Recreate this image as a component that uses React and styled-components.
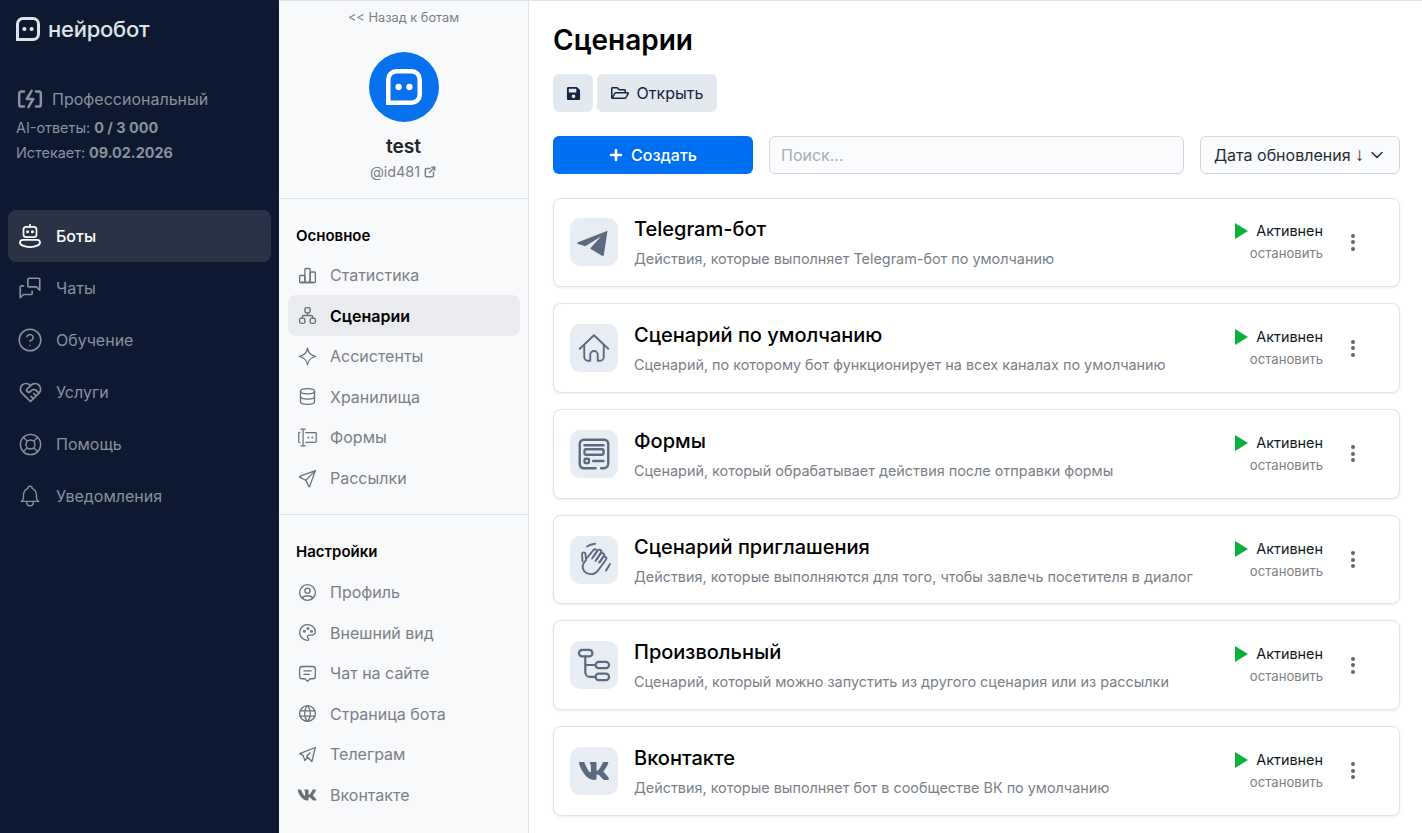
import React from 'react';
import styled, { createGlobalStyle } from 'styled-components';
import {
  TbMessages, TbHeartHandshake, TbLifebuoy, TbBell,
  TbChartBar, TbSitemap, TbDatabase, TbSend, TbUserCircle, TbPalette,
  TbMessage2, TbWorld, TbBrandTelegram, TbExternalLink, TbChevronDown,
} from 'react-icons/tb';
import { LuCircleHelp } from 'react-icons/lu';
import { FaVk, FaSave, FaRegFolderOpen, FaPlus } from 'react-icons/fa';

const GlobalStyle = createGlobalStyle`
  html, body { margin: 0; height: 100%; }
  body {
    font-family: Inter, "Liberation Sans", sans-serif;
    background: #fff;
    overflow: hidden;
  }
  * { box-sizing: border-box; }
`;

const Logo = ({ size = 24, color = '#fff' }) => (
  <svg width={size} height={size} viewBox="0 0 24 24" fill="none">
    <path d="M1.5 22.5V7A5.5 5.5 0 0 1 7 1.5h10A5.5 5.5 0 0 1 22.5 7v10a5.5 5.5 0 0 1-5.5 5.5H1.5z" stroke={color} strokeWidth="3" />
    <circle cx="8.4" cy="12" r="2.1" fill={color} />
    <circle cx="15.6" cy="12" r="2.1" fill={color} />
  </svg>
);

const Stroke = ({ children, size = 24, width = 1.5, box = 24 }) => (
  <svg width={size} height={size} viewBox={`0 0 ${box} ${box}`} fill="none" stroke="currentColor" strokeWidth={width} strokeLinecap="round" strokeLinejoin="round">
    {children}
  </svg>
);

const PlanIcon = () => (
  <Stroke size={26} width={2.3}>
    <path d="M6.5 5H4a2 2 0 0 0-2 2v10a2 2 0 0 0 2 2h2.5" />
    <path d="M17.5 5H20a2 2 0 0 1 2 2v10a2 2 0 0 1-2 2h-2.5" />
    <path d="M13.5 4.5L9 12h6l-4.5 7.5" />
  </Stroke>
);

const RobotIcon = () => (
  <Stroke size={26} width={1.6}>
    <path d="M12 1.5v2" />
    <rect x="6" y="3.5" width="12" height="9.5" rx="2.5" />
    <circle cx="9.8" cy="8" r=".6" fill="currentColor" />
    <circle cx="14.2" cy="8" r=".6" fill="currentColor" />
    <path d="M5.5 15.5h13a2.8 2.8 0 0 1 2.8 2.4c0 2.3-4 4.3-9.3 4.3s-9.3-2-9.3-4.3a2.8 2.8 0 0 1 2.8-2.4z" />
  </Stroke>
);

const StarIcon = () => (
  <Stroke size={21} width={1.4}>
    <path d="M12 2.5c.8 5.3 3.8 8.5 9.5 9.5-5.7 1-8.7 4.2-9.5 9.5-.8-5.3-3.8-8.5-9.5-9.5 5.7-1 8.7-4.2 9.5-9.5z" />
  </Stroke>
);

const FormFieldIcon = () => (
  <Stroke size={21} width={1.4}>
    <path d="M3.5 6H3a1 1 0 0 0-1 1v10a1 1 0 0 0 1 1h.5" />
    <path d="M4.5 2.5h5M4.5 21.5h5M7 2.5v19" />
    <path d="M10 6.5h11a1 1 0 0 1 1 1v9a1 1 0 0 1-1 1H10" />
    <circle cx="13" cy="12" r=".5" fill="currentColor" />
    <circle cx="17.5" cy="12" r=".5" fill="currentColor" />
  </Stroke>
);

const PlaneIcon = () => (
  <svg width="48" height="48" viewBox="0 0 48 48" fill="currentColor">
    <path d="M37.5 12.8 8 24.2c-1.2.5-1.1 1.3 0 1.7l7.3 2.4L31 18.5 20 30.5l12 7.2c1 .5 1.7.2 1.9-.9z" />
  </svg>
);

const HomeIcon = () => (
  <Stroke size={36} width={1.25}>
    <path d="M2.5 12.500L12 3.500l9.500 9" />
    <path d="M5.500 10v8a2.500 2.500 0 0 0 2.500 2.500h1.500v-4a2.500 2.500 0 0 1 5 0v4H16a2.500 2.500 0 0 0 2.500-2.500v-8" />
  </Stroke>
);

const FormsCardIcon = () => (
  <Stroke size={38} width={1.5}>
    <path d="M13 21H5.5A2.5 2.5 0 0 1 3 18.5v-13A2.5 2.5 0 0 1 5.5 3h13A2.5 2.5 0 0 1 21 5.5V18a3 3 0 0 1-3 3h-1.5" />
    <path d="M6 6.5h12" />
    <rect x="6" y="9" width="12" height="3.5" rx=".8" />
    <rect x="6" y="15" width="2.8" height="2.8" rx=".8" />
    <path d="M11.5 16.4H18" />
  </Stroke>
);

const WaveIcon = () => (
  <Stroke size={48} width={1.9} box={48}>
    <path d="M16 24l-2.5 3.500c-2 3.500-.5 7.500 3 9.500 4 2.200 9 1.200 11.500-2.500L36 23.500c1.300-2-1.500-4-3-2.300L29 26.500" />
    <path d="M30 26l3.800-6c1.300-2-1.500-4-3.200-2.200L25.500 25" />
    <path d="M26.500 23.500l4.500-7c1.200-2-1.500-3.800-3-2.200L22 22.500" />
    <path d="M23.500 20.500l3-4.500c1.200-2-1.300-3.700-2.900-2.200L16 23l-.5-5c-.3-2.300-3.500-2-3.500.3l.5 7" />
    <path d="M17 10.500c2-1.500 5-2.500 8-2.800" />
    <path d="M36 34.500l4-6.500" />
  </Stroke>
);

const TreeIcon = () => (
  <Stroke size={38} width={1.4}>
    <rect x="2.5" y="2.5" width="8.5" height="4" rx="2" />
    <rect x="13" y="10" width="8.5" height="4" rx="2" />
    <rect x="13" y="17.5" width="8.5" height="4" rx="2" />
    <path d="M6.5 6.5v10a3 3 0 0 0 3 3H13M6.5 12H13" />
  </Stroke>
);

const PlayMark = () => (
  <svg width="13" height="16" viewBox="0 0 13 16" fill="currentColor">
    <path d="M0 0l13 8-13 8z" />
  </svg>
);

const mainNav = [
  { label: 'Боты', icon: <RobotIcon />, active: true },
  { label: 'Чаты', icon: <TbMessages size={26} strokeWidth={1.5} /> },
  { label: 'Обучение', icon: <LuCircleHelp size={26} strokeWidth={1.4} /> },
  { label: 'Услуги', icon: <TbHeartHandshake size={27} strokeWidth={1.5} /> },
  { label: 'Помощь', icon: <TbLifebuoy size={27} strokeWidth={1.25} /> },
  { label: 'Уведомления', icon: <TbBell size={26} strokeWidth={1.25} /> },
];

const basicNav = [
  { label: 'Статистика', icon: <TbChartBar size={21} strokeWidth={1.5} /> },
  { label: 'Сценарии', icon: <TbSitemap size={21} strokeWidth={1.6} />, active: true },
  { label: 'Ассистенты', icon: <StarIcon /> },
  { label: 'Хранилища', icon: <TbDatabase size={21} strokeWidth={1.5} /> },
  { label: 'Формы', icon: <FormFieldIcon /> },
  { label: 'Рассылки', icon: <TbSend size={21} strokeWidth={1.5} /> },
];

const settingsNav = [
  { label: 'Профиль', icon: <TbUserCircle size={21} strokeWidth={1.5} /> },
  { label: 'Внешний вид', icon: <TbPalette size={21} strokeWidth={1.5} /> },
  { label: 'Чат на сайте', icon: <TbMessage2 size={21} strokeWidth={1.5} /> },
  { label: 'Страница бота', icon: <TbWorld size={21} strokeWidth={1.5} /> },
  { label: 'Телеграм', icon: <TbBrandTelegram size={21} strokeWidth={1.5} /> },
  { label: 'Вконтакте', icon: <FaVk size={20} /> },
];

const scenarios = [
  { title: 'Telegram-бот', text: 'Действия, которые выполняет Telegram-бот по умолчанию', icon: <PlaneIcon /> },
  { title: 'Сценарий по умолчанию', text: 'Сценарий, по которому бот функционирует на всех каналах по умолчанию', icon: <HomeIcon /> },
  { title: 'Формы', text: 'Сценарий, который обрабатывает действия после отправки формы', icon: <FormsCardIcon /> },
  { title: 'Сценарий приглашения', text: 'Действия, которые выполняются для того, чтобы завлечь посетителя в диалог', icon: <WaveIcon /> },
  { title: 'Произвольный', text: 'Сценарий, который можно запустить из другого сценария или из рассылки', icon: <TreeIcon /> },
  { title: 'Вконтакте', text: 'Действия, которые выполняет бот в сообществе ВК по умолчанию', icon: <FaVk size={32} /> },
];

const App = () => (
  <>
    <GlobalStyle />
    <Page>
      <DarkSidebar>
        <Brand>
          <Logo size={24} color="#dfe3e8" />
          <BrandName>нейробот</BrandName>
        </Brand>
        <Plan>
          <PlanRow>
            <PlanIcon />
            <PlanName>Профессиональный</PlanName>
          </PlanRow>
          <PlanLine>AI-ответы: <b>0 / 3 000</b></PlanLine>
          <PlanLine>Истекает: <b>09.02.2026</b></PlanLine>
        </Plan>
        <DarkNav>
          {mainNav.map((item) => (
            <DarkNavItem key={item.label} $active={item.active}>
              <DarkIcon>{item.icon}</DarkIcon>
              {item.label}
            </DarkNavItem>
          ))}
        </DarkNav>
      </DarkSidebar>

      <BotPanel>
        <BackLink>&lt;&lt; Назад к ботам</BackLink>
        <Avatar><Logo size={36} /></Avatar>
        <BotName>test</BotName>
        <BotHandle>@id481<TbExternalLink size={14} strokeWidth={2.6} /></BotHandle>
        <Section>
          <SectionTitle>Основное</SectionTitle>
          {basicNav.map((item) => (
            <PanelItem key={item.label} $active={item.active}>
              <PanelIcon>{item.icon}</PanelIcon>
              {item.label}
            </PanelItem>
          ))}
        </Section>
        <Section>
          <SectionTitle>Настройки</SectionTitle>
          {settingsNav.map((item) => (
            <PanelItem key={item.label}>
              <PanelIcon>{item.icon}</PanelIcon>
              {item.label}
            </PanelItem>
          ))}
        </Section>
      </BotPanel>

      <Main>
        <Title>Сценарии</Title>
        <Tools>
          <ToolButton $square><FaSave size={15} /></ToolButton>
          <ToolButton><FaRegFolderOpen size={18} />Открыть</ToolButton>
        </Tools>
        <Filters>
          <CreateButton><FaPlus size={14} />Создать</CreateButton>
          <Search placeholder="Поиск..." />
          <Sort>
            <span>Дата обновления <SortArrow>↓</SortArrow></span>
            <TbChevronDown size={20} strokeWidth={1.8} />
          </Sort>
        </Filters>
        <Cards>
          {scenarios.map((s) => (
            <Card key={s.title}>
              <CardIcon>{s.icon}</CardIcon>
              <CardBody>
                <CardTitle>{s.title}</CardTitle>
                <CardText>{s.text}</CardText>
              </CardBody>
              <Status>
                <StatusRow><PlayMark />Активнен</StatusRow>
                <StopLink>остановить</StopLink>
              </Status>
              <Dots>
                <i /><i /><i />
              </Dots>
            </Card>
          ))}
        </Cards>
      </Main>
    </Page>
  </>
);

const Page = styled.div`
  display: flex;
  height: 100vh;
  overflow: hidden;
`;

const DarkSidebar = styled.aside`
  flex: 0 0 279px;
  background: #0d1930;
  padding: 16px 8px 0;
`;

const Brand = styled.div`
  display: flex;
  align-items: center;
  gap: 8px;
  padding-left: 8px;
  height: 26px;
`;

const BrandName = styled.span`
  font-size: 22px;
  font-weight: 500;
  letter-spacing: -0.25px;
  color: #dfe3e8;
`;

const Plan = styled.div`
  margin-top: 44px;
  padding-left: 8px;
  color: #8a919c;
`;

const PlanRow = styled.div`
  display: flex;
  align-items: center;
  gap: 9px;
  padding-left: 1px;
  height: 26px;
  margin-bottom: 3px;
`;

const PlanName = styled.span`
  font-size: 16px;
`;

const PlanLine = styled.div`
  font-size: 14.4px;
  line-height: 25px;
  b { font-weight: 700; }
`;

const DarkNav = styled.nav`
  margin-top: 45px;
  display: flex;
  flex-direction: column;
`;

const DarkNavItem = styled.div`
  display: flex;
  align-items: center;
  height: 52px;
  padding-left: 8px;
  border-radius: 8px;
  font-size: 16px;
  font-weight: ${({ $active }) => ($active ? 500 : 400)};
  color: ${({ $active }) => ($active ? '#fff' : '#8a919c')};
  background: ${({ $active }) => ($active ? '#2a3345' : 'transparent')};
`;

const DarkIcon = styled.span`
  display: flex;
  justify-content: center;
  width: 28px;
  margin-right: 12px;
`;

const BotPanel = styled.aside`
  flex: 0 0 250px;
  background: #f8f9fb;
  border-top: 1px solid #dfe2e7;
  border-right: 1px solid #dfe2e7;
  display: flex;
  flex-direction: column;
  align-items: center;
`;

const BackLink = styled.a`
  margin-top: 9px;
  font-size: 12.8px;
  line-height: 16px;
  color: #7b8087;
`;

const Avatar = styled.div`
  margin-top: 26px;
  width: 70px;
  height: 70px;
  border-radius: 50%;
  background: #0872ee;
  display: flex;
  align-items: center;
  justify-content: center;
`;

const BotName = styled.div`
  margin-top: 11px;
  font-size: 19.2px;
  line-height: 26px;
  font-weight: 600;
  color: #20242b;
`;

const BotHandle = styled.div`
  margin-top: 3px;
  display: flex;
  align-items: center;
  gap: 3px;
  font-size: 14.4px;
  line-height: 20px;
  color: #7b8087;
`;

const SectionTitle = styled.h3`
  margin: 0 0 6.8px;
  padding-left: 8px;
  font-size: 15px;
  line-height: 24px;
  font-weight: 600;
  color: #000;
`;

const Section = styled.section`
  align-self: stretch;
  margin-top: 16px;
  padding: 25px 8px 0 9px;
  border-top: 1px solid #dfe2e7;
  & + & ${SectionTitle} {
    margin-bottom: 7.4px;
  }
`;

const PanelItem = styled.div`
  display: flex;
  align-items: center;
  height: 40.6px;
  padding-left: 8px;
  border-radius: 8px;
  font-size: 16px;
  font-weight: ${({ $active }) => ($active ? 600 : 400)};
  color: ${({ $active }) => ($active ? '#000' : '#7b8087')};
  background: ${({ $active }) => ($active ? '#e9ebee' : 'transparent')};
`;

const PanelIcon = styled.span`
  display: flex;
  justify-content: center;
  width: 22px;
  margin-right: 12px;
  color: #6c7178;
`;

const Main = styled.main`
  flex: 1;
  min-width: 0;
  border-top: 1px solid #dfe2e7;
  padding: 0 22px 0 24px;
`;

const Title = styled.h1`
  margin: 21px 0 0;
  font-size: 28px;
  line-height: 36px;
  font-weight: 600;
  color: #000;
`;

const Tools = styled.div`
  display: flex;
  gap: 4px;
  margin-top: 16px;
`;

const ToolButton = styled.button`
  display: flex;
  align-items: center;
  justify-content: center;
  gap: 8px;
  height: 38px;
  width: ${({ $square }) => ($square ? '40px' : '120px')};
  border: 0;
  border-radius: 6px;
  background: #e4e8ef;
  color: #13253f;
  font: 400 16px Inter, sans-serif;
`;

const Filters = styled.div`
  display: flex;
  gap: 16px;
  margin-top: 24px;
`;

const CreateButton = styled.button`
  flex: 0 0 200px;
  height: 38px;
  display: flex;
  align-items: center;
  justify-content: center;
  gap: 8px;
  border: 0;
  border-radius: 6px;
  background: #0070f3;
  color: #fff;
  font: 500 16px Inter, sans-serif;
`;

const Search = styled.input`
  flex: 1;
  min-width: 0;
  height: 38px;
  padding: 0 11px;
  border: 1px solid #d3d7dd;
  border-radius: 6px;
  background: #fafbfd;
  font: 400 16px Inter, sans-serif;
  &::placeholder { color: #a9adb3; }
`;

const Sort = styled.div`
  flex: 0 0 200px;
  height: 38px;
  display: flex;
  align-items: center;
  justify-content: space-between;
  padding: 0 12px 0 13px;
  border: 1px solid #d3d7dd;
  border-radius: 6px;
  background: #fafbfd;
  font-size: 16px;
  white-space: nowrap;
  color: #262b33;
`;

const SortArrow = styled.span`
  font-family: "Liberation Sans", sans-serif;
  font-size: 19px;
  line-height: 1;
  color: #3a3030;
`;

const Cards = styled.div`
  display: flex;
  flex-direction: column;
  gap: 16px;
  margin-top: 23.6px;
`;

const Card = styled.article`
  display: flex;
  align-items: center;
  height: 89.7px;
  padding: 0 16px;
  border: 1px solid #e2e4e8;
  border-radius: 8px;
  background: #fff;
  box-shadow: 0 1px 3px rgba(0, 0, 0, 0.08);
`;

const CardIcon = styled.div`
  flex: 0 0 48px;
  height: 48px;
  display: flex;
  align-items: center;
  justify-content: center;
  border-radius: 10px;
  background: #e8ecf3;
  color: #5c6a80;
`;

const CardBody = styled.div`
  flex: 1;
  min-width: 0;
  margin-left: 16px;
  padding-top: 1px;
`;

const CardTitle = styled.div`
  font-size: 20px;
  line-height: 26px;
  font-weight: 500;
  color: #000;
`;

const CardText = styled.div`
  margin-top: 7px;
  font-size: 14.4px;
  line-height: 20px;
  color: #7b8087;
  white-space: nowrap;
`;

const Status = styled.div`
  display: flex;
  flex-direction: column;
  align-items: flex-end;
  margin-right: 28px;
`;

const StatusRow = styled.div`
  display: flex;
  align-items: center;
  gap: 8px;
  font-size: 14.4px;
  line-height: 22px;
  color: #13181f;
  svg { color: #0ab03c; }
`;

const StopLink = styled.div`
  font-size: 13.1px;
  line-height: 22px;
  color: #7b8087;
`;

const Dots = styled.div`
  display: flex;
  flex-direction: column;
  gap: 2.5px;
  margin-right: 28px;
  i {
    width: 4px;
    height: 4px;
    border-radius: 50%;
    background: #60666f;
  }
`;

export default App;
